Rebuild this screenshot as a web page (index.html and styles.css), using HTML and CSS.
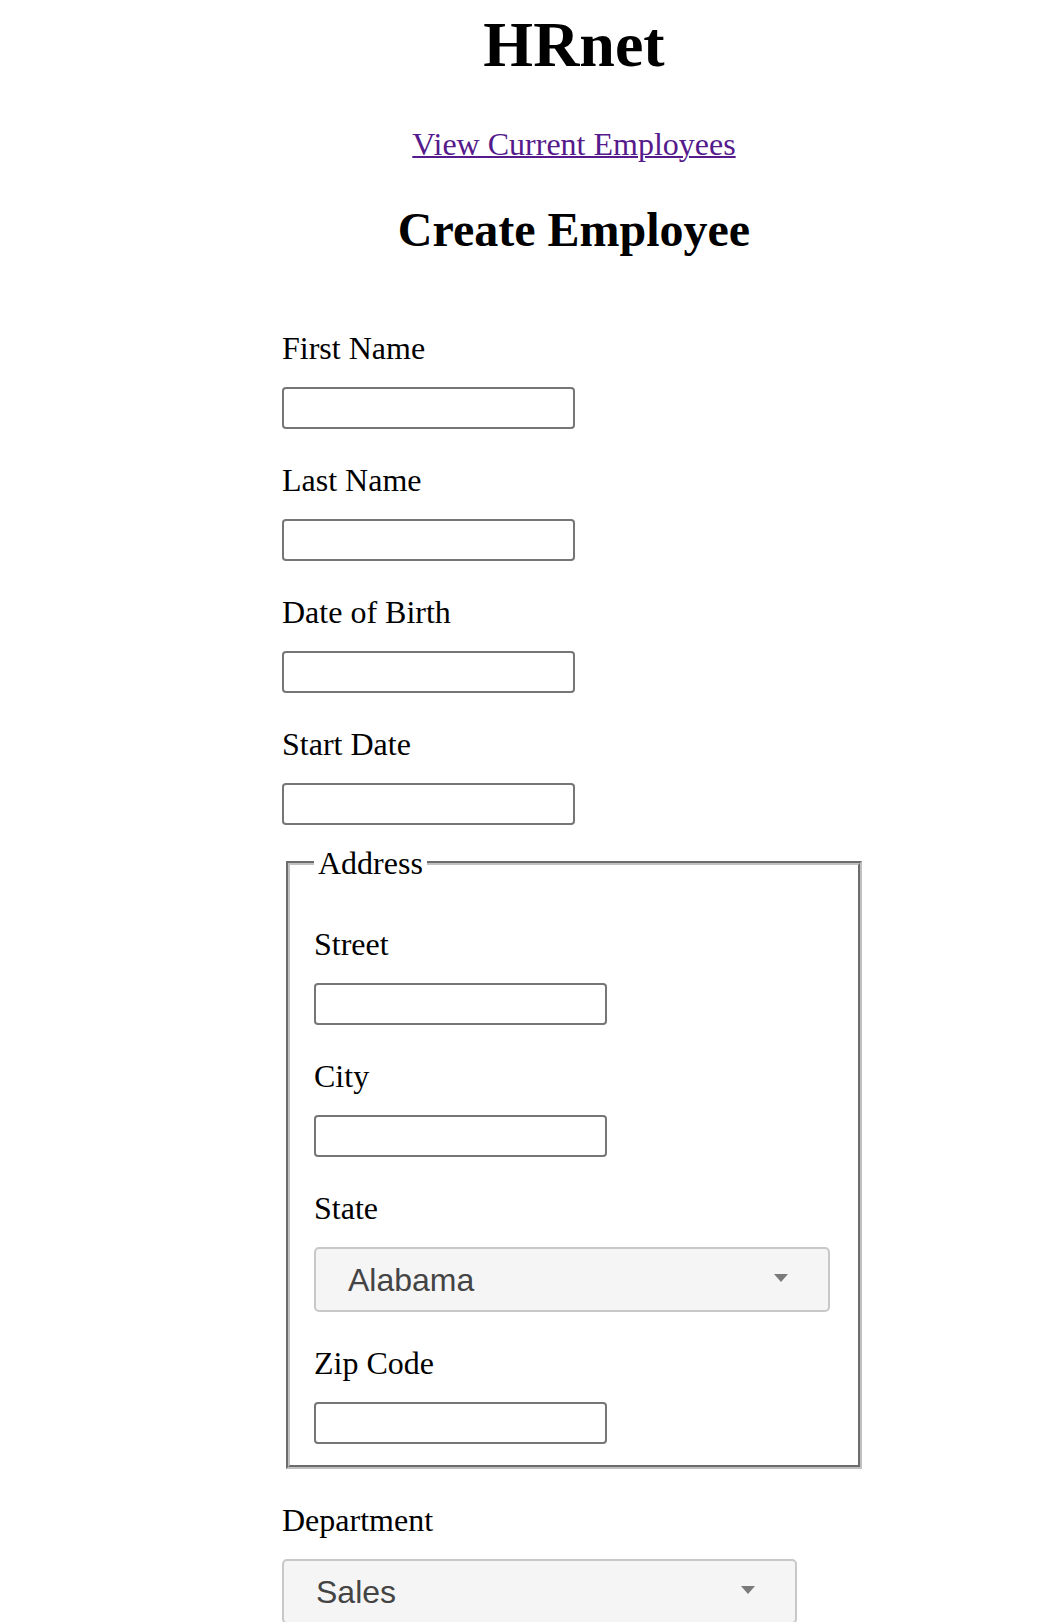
FILE: index.html
```html
<!DOCTYPE html>
<html lang="en">
<head>
<meta charset="utf-8">
<title>HRnet</title>
<link rel="stylesheet" href="styles.css">
</head>
<body>
<div class="app">
  <h1 class="title">HRnet</h1>
  <a class="nav-link" href="#employees">View Current Employees</a>
  <h2 class="subtitle">Create Employee</h2>
  <form class="form" action="#">
    <label class="field-label" for="first-name">First Name</label>
    <input class="text-input" id="first-name" type="text">

    <label class="field-label" for="last-name">Last Name</label>
    <input class="text-input" id="last-name" type="text">

    <label class="field-label" for="date-of-birth">Date of Birth</label>
    <input class="text-input" id="date-of-birth" type="text">

    <label class="field-label" for="start-date">Start Date</label>
    <input class="text-input" id="start-date" type="text">

    <fieldset class="address">
      <legend class="address-legend">Address</legend>

      <label class="field-label" for="street">Street</label>
      <input class="text-input" id="street" type="text">

      <label class="field-label" for="city">City</label>
      <input class="text-input" id="city" type="text">

      <label class="field-label" for="state">State</label>
      <div class="dropdown" id="state" role="button" tabindex="0">
        <span class="dropdown-value">Alabama</span>
        <span class="dropdown-arrow"></span>
      </div>

      <label class="field-label" for="zip-code">Zip Code</label>
      <input class="text-input" id="zip-code" type="text">
    </fieldset>

    <label class="field-label" for="department">Department</label>
    <div class="dropdown dropdown-wide" id="department" role="button" tabindex="0">
      <span class="dropdown-value">Sales</span>
      <span class="dropdown-arrow"></span>
    </div>
  </form>
</div>
</body>
</html>
```
FILE: styles.css
```css
html,
body {
  margin: 0;
  padding: 0;
  background: #ffffff;
  overflow: hidden;
}

.app {
  display: flex;
  flex-direction: column;
  align-items: center;
  padding-left: 100px;
  font-family: "Liberation Serif", "Times New Roman", serif;
  color: #000000;
}

.title {
  margin: 8px 0 0;
  font-size: 64px;
  line-height: 74px;
  font-weight: bold;
}

.nav-link {
  margin-top: 43px;
  font-size: 32px;
  line-height: 38px;
  color: #551a8b;
  text-decoration: underline;
  text-decoration-thickness: 2px;
}

.subtitle {
  margin: 39px 0 39px;
  font-size: 48px;
  line-height: 56px;
  font-weight: bold;
}

.form {
  display: block;
  width: 584px;
  margin: 0;
}

.field-label {
  display: block;
  margin: 32px 0 20px;
  font-size: 32px;
  line-height: 38px;
}

.text-input {
  display: block;
  box-sizing: border-box;
  width: 293px;
  height: 42px;
  margin: 0;
  padding: 2px 4px;
  border: 2px solid #767676;
  border-radius: 4px;
  background: #ffffff;
  font-family: "Liberation Sans", Arial, sans-serif;
  font-size: 26px;
}

.address {
  margin: 19px 4px 0;
  padding: 11px 24px 21px;
  border: 4px groove #c0c0c0;
  min-width: 0;
}

.address-legend {
  padding: 0 4px;
  font-size: 32px;
  line-height: 38px;
}

.dropdown {
  display: flex;
  align-items: center;
  justify-content: space-between;
  box-sizing: border-box;
  width: 516px;
  height: 65px;
  padding: 0 40px 0 32px;
  border: 2px solid #c8c8c8;
  border-radius: 5px;
  background: #f5f5f5;
  color: #444444;
  font-family: "Liberation Sans", Arial, sans-serif;
  font-size: 32px;
  line-height: 38px;
}

.dropdown-wide {
  width: 515px;
}

.dropdown-arrow {
  width: 0;
  height: 0;
  margin-bottom: 4px;
  border-style: solid;
  border-width: 8px 7px 0;
  border-color: #7a7a7a transparent transparent;
}
```
